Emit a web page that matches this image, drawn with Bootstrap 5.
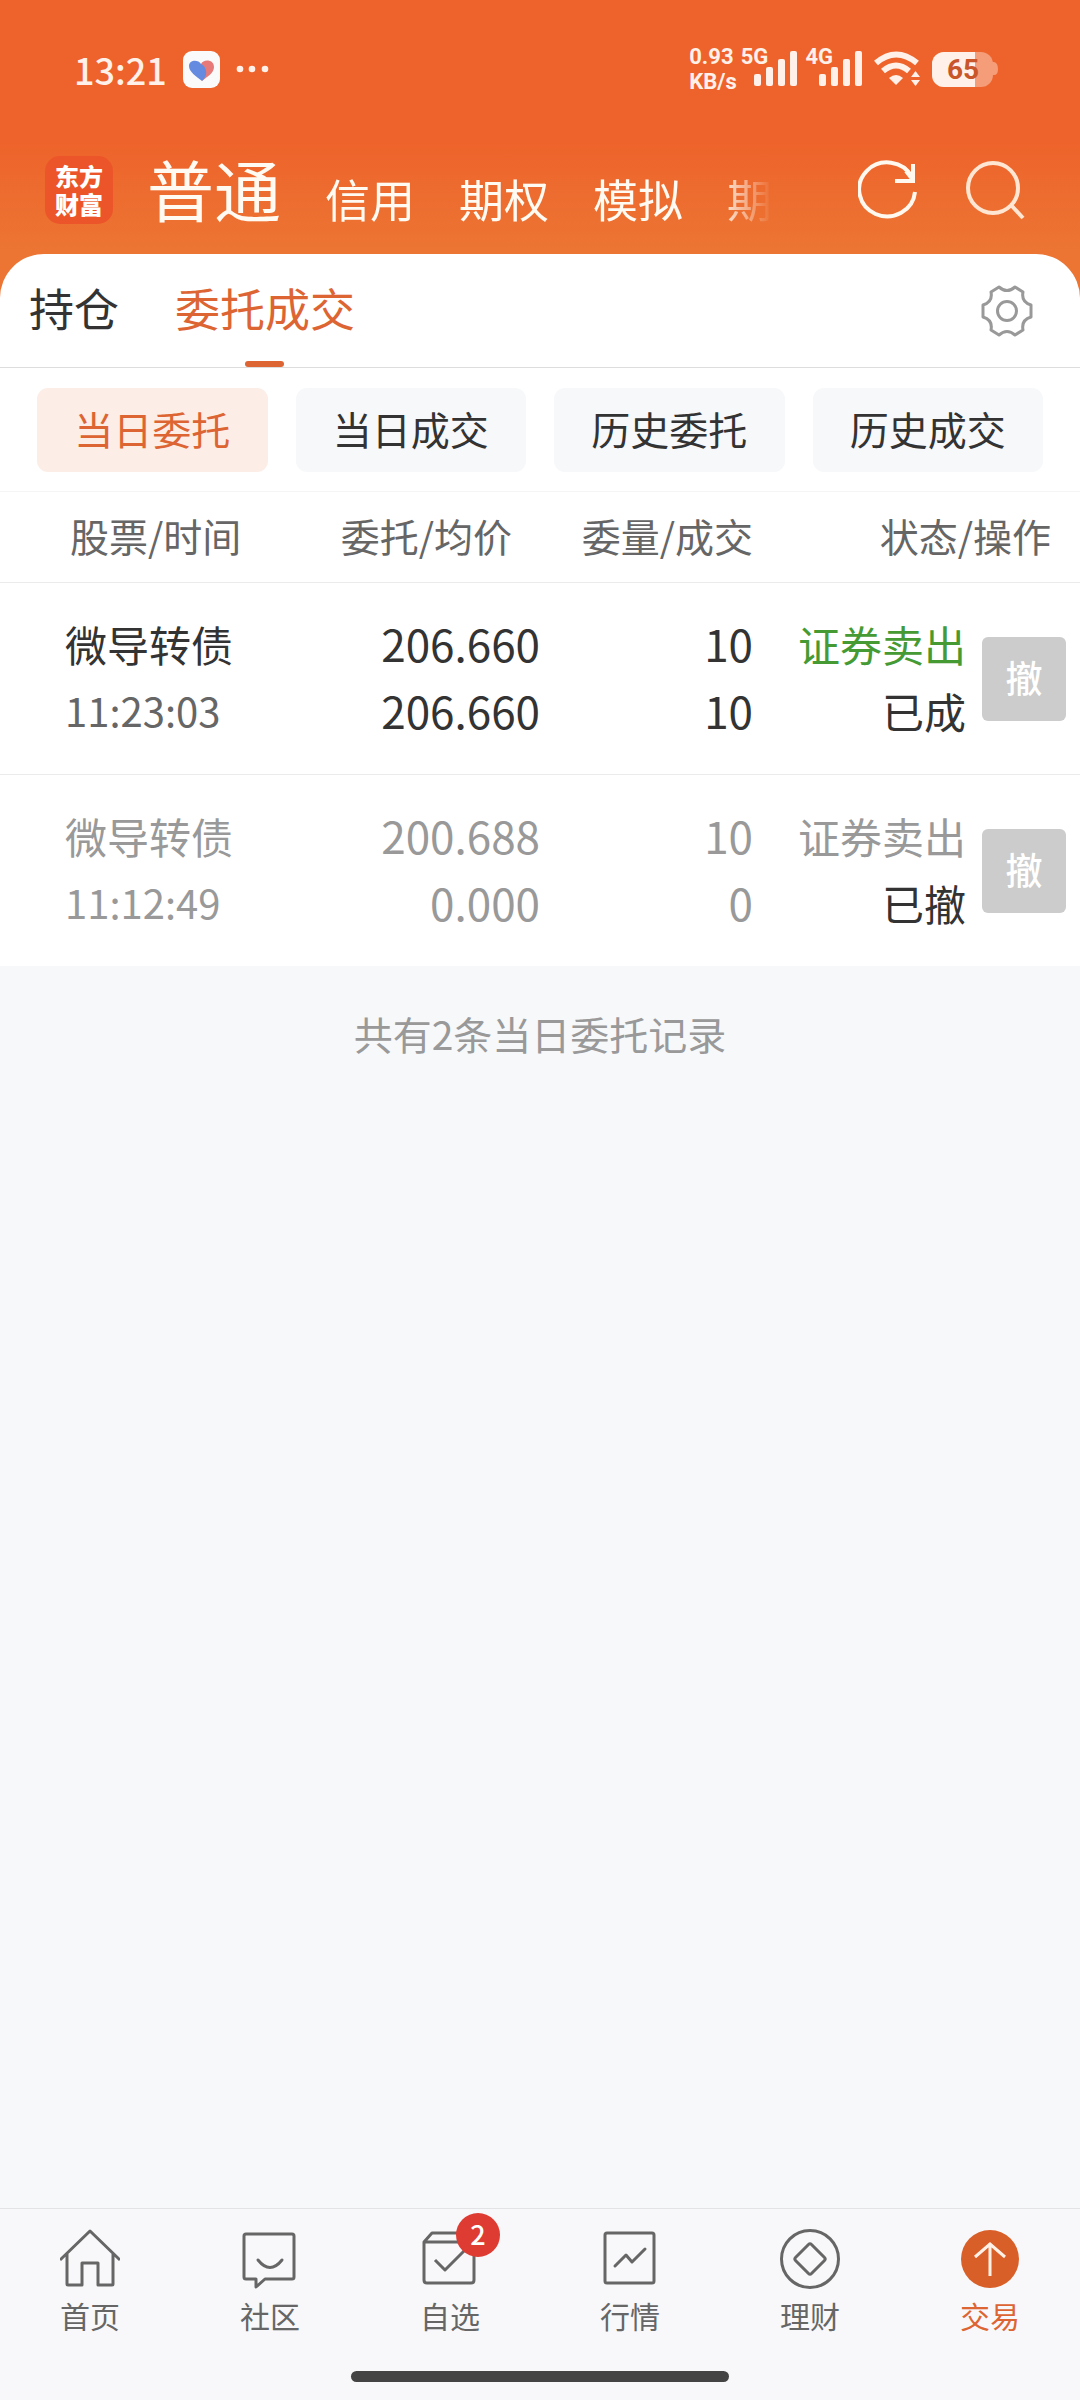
<!DOCTYPE html>
<html lang="zh-CN">
<head>
<meta charset="utf-8">
<meta name="viewport" content="width=device-width, initial-scale=1">
<title>委托成交</title>
<link href="https://cdn.jsdelivr.net/npm/bootstrap@5.3.0/dist/css/bootstrap.min.css" rel="stylesheet">
<style>
  :root { --brand: #dd6533; --ink: #333; --ink-2: #666; --ink-3: #999; }
  body { font-family: "Noto Sans CJK SC", sans-serif; color: var(--ink); background: #f7f8fa; }
  a { text-decoration: none; color: inherit; }
  svg { display: block; flex: none; }
  .top-area { background: linear-gradient(#ee632b 0, #ee632b 140px, #ec7533 250px); }
  .status-bar { height: 140px; padding: 0 82px 0 74px; color: #fff1ea; }
  .status-bar .inner-row { height: 138px; }
  .clock { font-size: 36px; font-weight: 500; line-height: 44px; }
  .net-text, .cell-tag { font-family: Roboto, "Liberation Sans", sans-serif; font-size: 22px; font-weight: 700; line-height: 25px; }
  .cell-tag { align-self: flex-start; }
  .signal { margin-left: -14px; }
  .battery-text { font: 700 28px Roboto, "Liberation Sans", sans-serif; fill: #c9552a; }
  .brand-row { height: 114px; padding: 0 54px 0 45px; }
  .brand-logo { width: 68px; height: 68px; margin-top: 16px; border-radius: 15px; background: #ec5529; color: #fff; font-size: 24px; font-weight: 900; line-height: 28px; text-align: center; }
  .account-nav { gap: 44px; margin-left: 34px; font-size: 45px; line-height: 74px; color: #fffaf2; -webkit-mask-image: linear-gradient(to left, transparent, #000 56px); mask-image: linear-gradient(to left, transparent, #000 56px); }
  .account-nav .current { font-size: 67px; line-height: 96px; }
  .header-tools { gap: 48px; margin-top: 19px; }
  .icon-btn { padding: 0; border: 0; background: none; }
  .sheet { background: #fff; }
  .sheet-top { background: #ec7533; }
  .section-tabs { height: 114px; padding: 0 46px 0 29px; background: #fff; border-radius: 44px 44px 0 0; border-bottom: 1px solid #ddd; font-size: 45px; }
  .section-tabs .tab-list { gap: 56px; }
  .section-tabs .tab-item { height: 113px; line-height: 108px; position: relative; }
  .section-tabs .tab-item.active { color: var(--brand); }
  .section-tabs .tab-item.active::after { content: ""; position: absolute; bottom: 0; left: 50%; width: 39px; height: 6px; margin-left: -20px; border-radius: 3px; background: var(--brand); }
  .filters { gap: 28px; padding: 20px 37px 19px; border-bottom: 1px solid #f5f5f7; }
  .filters .btn { --bs-btn-padding-x: 0; --bs-btn-padding-y: 0; --bs-btn-border-width: 0; --bs-btn-border-radius: 11px; --bs-btn-font-size: 39px; --bs-btn-color: #333; --bs-btn-bg: #f7f8fa; --bs-btn-active-color: var(--brand); --bs-btn-active-bg: #fcede6; height: 84px; padding-bottom: 4px; line-height: 80px; }
  .orders { table-layout: fixed; width: 100%; margin: 0; }
  .orders th { padding: 0 0 4px; font-size: 39px; font-weight: 400; line-height: 86px; color: var(--ink-2); border-bottom: 1px solid #ebebeb; white-space: nowrap; }
  .orders td { padding: 27px 0 30px; font-size: 42px; line-height: 67px; white-space: nowrap; border-bottom: 1px solid #ebebeb; }
  .orders tbody tr:last-child td { border-bottom: 0; }
  .orders th:first-child { padding-left: 70px; }
  .orders th:nth-child(2) { padding-right: 28px; }
  .orders th:last-child { padding-right: 29px; }
  .orders td:first-child { padding-left: 65px; }
  .orders .w-num { width: 213px; }
  .orders .w-act { width: 114px; }
  .orders .num { font-size: 44px; }
  .orders .time { font-size: 40px; color: var(--ink-2); }
  .orders .done td, .orders .done .time { color: var(--ink-3); }
  .sell { color: #459a33; }
  .orders .state, .orders .done .state { color: var(--ink); }
  .orders td:last-child { padding: 0 14px 0 0; }
  .cancel-btn { display: block; width: 84px; height: 84px; margin-left: auto; padding: 0 0 4px; border: 0; border-radius: 6px; background: #ccc; color: #fff; font-size: 37px; font-weight: 500; line-height: 80px; }
  .summary { padding-top: 37px; font-size: 39px; line-height: 60px; color: var(--ink-3); }
  .bottom-bar { background: #f8f8fa; border-top: 1px solid #e3e3e5; padding-top: 20px; }
  .bottom-bar a { font-size: 30px; line-height: 36px; color: var(--ink-2); }
  .bottom-bar a span { margin-top: 8px; }
  .bottom-bar a.active { color: var(--brand); }
  .count-badge { position: absolute; left: 36px; top: -16px; width: 44px; height: 44px; margin: 0; border-radius: 50%; background: #de3b33; color: #fff; font-size: 27px; font-weight: 500; line-height: 42px; text-align: center; font-style: normal; }
  .home-bar { width: 35%; height: 11px; margin: 38px auto 18px; border-radius: 6px; background: #444; }
</style>
</head>
<body>
<div class="d-flex flex-column min-vh-100">
  <header class="top-area">
    <div class="status-bar">
      <div class="inner-row d-flex align-items-center justify-content-between">
        <div class="d-flex align-items-center">
          <span class="clock">13:21</span>
          <svg class="ms-3" width="37" height="37" viewBox="0 0 37 37"><rect width="37" height="37" rx="9" fill="#fbfafa"/><path d="M18 13c2-5 13-5 13 3 0 6-6 9-12 14z" fill="#e77a78"/><path d="M19 30C13 25 6 21 6 15c0-6 9-7 12-2 4 2 6 6 5 11-1 3-3 5-4 6z" fill="#658be0"/></svg>
          <svg class="ms-3" width="34" height="8" viewBox="0 0 34 8" fill="currentColor"><circle cx="4" cy="4" r="3.300"/><circle cx="16" cy="4" r="3.300"/><circle cx="29" cy="4" r="3.300"/></svg>
        </div>
        <div class="d-flex align-items-center">
          <div class="net-text">0.93<br>KB/s</div>
          <span class="cell-tag ms-1">5G</span>
          <svg class="signal" width="43" height="36" viewBox="0 0 43 36" fill="currentColor"><rect y="23" width="7" height="12" rx="2"/><rect x="12" y="16" width="7" height="19" rx="2"/><rect x="24" y="8" width="7" height="27" rx="2"/><rect x="36" width="7" height="35" rx="2"/></svg>
          <span class="cell-tag ms-2">4G</span>
          <svg class="signal" width="43" height="36" viewBox="0 0 43 36" fill="currentColor"><rect y="23" width="7" height="12" rx="2"/><rect x="12" y="16" width="7" height="19" rx="2"/><rect x="24" y="8" width="7" height="27" rx="2"/><rect x="36" width="7" height="35" rx="2"/></svg>
          <svg class="ms-2" width="54" height="36" viewBox="-4 0 54 36" fill="none" stroke="currentColor"><path d="M2 12Q22-5 43 12" stroke-width="6"/><path d="M9 20Q22 9 35 20" stroke-width="6"/><path d="M15 27q7-6 14 0l-7 7z" fill="currentColor" stroke="none"/><path d="M37 26l4.500-6 4.500 6zM37 29h9l-4.500 6z" fill="currentColor" stroke="none"/></svg>
          <svg class="ms-2" width="66" height="36" viewBox="0 0 66 36"><path d="M60 11h2q4 1 4 7t-4 6h-2z" fill="#f59c79"/><rect y="1" width="61" height="35" rx="12" fill="#f59c79"/><path d="M12 1h31v35H12A12 12 0 0 1 0 24V13A12 12 0 0 1 12 1z" fill="#fff1ea"/><text class="battery-text" x="31" y="28" text-anchor="middle">65</text></svg>
        </div>
      </div>
    </div>
    <div class="brand-row d-flex align-items-start">
      <a href="#" class="brand-logo d-flex flex-column justify-content-center"><span>东方</span><span>财富</span></a>
      <nav class="account-nav d-flex align-items-end">
        <a href="#" class="current">普通</a><a href="#">信用</a><a href="#">期权</a><a href="#">模拟</a><a href="#">期</a>
      </nav>
      <div class="header-tools d-flex ms-auto">
        <button class="icon-btn" type="button" aria-label="刷新"><svg width="60" height="64" viewBox="0 0 60 64" fill="none" stroke="#fff8ee" stroke-width="4"><path d="M54 19A28 27 0 1 0 57 34M54 19L50 14" transform="translate(0 -1)"/><path d="M55 5v17H37M55 21L48 12"/></svg></button>
        <button class="icon-btn" type="button" aria-label="搜索"><svg width="60" height="64" viewBox="0 0 60 64" fill="none" stroke="#ffe6d2" stroke-width="4"><circle cx="27" cy="29" r="25"/><path d="M45 46l12 13"/></svg></button>
      </div>
    </div>
  </header>

  <main class="flex-grow-1">
    <div class="sheet">
      <div class="sheet-top">
        <div class="section-tabs d-flex justify-content-between align-items-center">
          <nav class="tab-list d-flex"><a class="tab-item" href="#">持仓</a><a class="tab-item active" href="#" aria-current="page">委托成交</a></nav>
          <button class="icon-btn" type="button" aria-label="设置"><svg width="54" height="54" viewBox="-27 -27 54 54" fill="none" stroke="#999" stroke-width="3"><path stroke-linejoin="round" d="M-8-24Q0-17 8-24L16-19Q14-9 24-6V6Q14 9 16 19L8 24Q0 17-8 24L-16 19Q-14 9-24 6V-6Q-14-9-16-19Z"/><circle r="9.500"/></svg></button>
        </div>
      </div>
      <div class="filters d-flex">
        <button type="button" class="btn active flex-fill">当日委托</button>
        <button type="button" class="btn flex-fill">当日成交</button>
        <button type="button" class="btn flex-fill">历史委托</button>
        <button type="button" class="btn flex-fill">历史成交</button>
      </div>
      <table class="orders">
        <colgroup><col><col><col class="w-num"><col class="w-num"><col class="w-act"></colgroup>
        <thead>
          <tr><th>股票/时间</th><th class="text-end">委托/均价</th><th class="text-end">委量/成交</th><th class="text-end" colspan="2">状态/操作</th></tr>
        </thead>
        <tbody>
          <tr>
            <td>微导转债<div class="time">11:23:03</div></td>
            <td class="text-end num">206.660<div>206.660</div></td>
            <td class="text-end num">10<div>10</div></td>
            <td class="text-end"><span class="sell">证券卖出</span><div class="state">已成</div></td>
            <td class="align-middle"><button class="cancel-btn" type="button">撤</button></td>
          </tr>
          <tr class="done">
            <td>微导转债<div class="time">11:12:49</div></td>
            <td class="text-end num">200.688<div>0.000</div></td>
            <td class="text-end num">10<div>0</div></td>
            <td class="text-end">证券卖出<div class="state">已撤</div></td>
            <td class="align-middle"><button class="cancel-btn" type="button">撤</button></td>
          </tr>
        </tbody>
      </table>
    </div>
    <p class="summary text-center mb-0">共有2条当日委托记录</p>
  </main>

  <footer class="bottom-bar">
    <nav class="row row-cols-6 g-0">
      <a href="#" class="col d-flex flex-column align-items-center"><svg width="60" height="60" viewBox="0 0 60 60" fill="none" stroke="#666" stroke-width="3" stroke-linejoin="round"><path d="M0 31L30 2l30 29M7 25v30q0 1 1 1h14V34h16v22h14q1 0 1-1V25"/></svg><span>首页</span></a>
      <a href="#" class="col d-flex flex-column align-items-center"><svg width="60" height="60" viewBox="0 0 60 60" fill="none" stroke="#666" stroke-width="3" stroke-linejoin="round"><path d="M6 5h46q2 0 2 2v41q0 2-2 2H25l-9 8v-8H6q-2 0-2-2V7q0-2 2-2z"/><path d="M18 31q12 15 24 0" stroke-linecap="round"/></svg><span>社区</span></a>
      <a href="#" class="col d-flex flex-column align-items-center"><div class="position-relative"><svg width="60" height="60" viewBox="0 0 60 60" fill="none" stroke="#666" stroke-width="3" stroke-linejoin="round"><path d="M4 13l8-9h34l8 9zM4 13v38q0 3 3 3h44q3 0 3-3V13M15 31l10 10 20-20"/></svg><i class="count-badge">2</i></div><span>自选</span></a>
      <a href="#" class="col d-flex flex-column align-items-center"><svg width="60" height="60" viewBox="0 0 60 60" fill="none" stroke="#666" stroke-width="3" stroke-linejoin="round"><rect x="5" y="4" width="49" height="50" rx="2"/><path d="M15 37l11-11 6 7 13-13" stroke-linecap="round"/></svg><span>行情</span></a>
      <a href="#" class="col d-flex flex-column align-items-center"><svg width="60" height="60" viewBox="0 0 60 60" fill="none" stroke="#666" stroke-width="3" stroke-linejoin="round"><circle cx="30" cy="30" r="28.500"/><path d="M28.500 15.500q1.500-1.500 3 0l13 13q1.500 1.500 0 3l-13 13q-1.500 1.500-3 0l-13-13q-1.500-1.500 0-3z"/></svg><span>理财</span></a>
      <a href="#" class="col d-flex flex-column align-items-center active" aria-current="page"><svg width="60" height="60" viewBox="0 0 60 60" fill="none" stroke="#fff1e6" stroke-width="3"><circle cx="30" cy="30" r="29" fill="#d85f28" stroke="none"/><path d="M30 47V15M15 28l15-13 15 13"/></svg><span>交易</span></a>
    </nav>
    <div class="home-bar"></div>
  </footer>
</div>
<script src="https://cdn.jsdelivr.net/npm/bootstrap@5.3.0/dist/js/bootstrap.bundle.min.js"></script>
</body>
</html>
